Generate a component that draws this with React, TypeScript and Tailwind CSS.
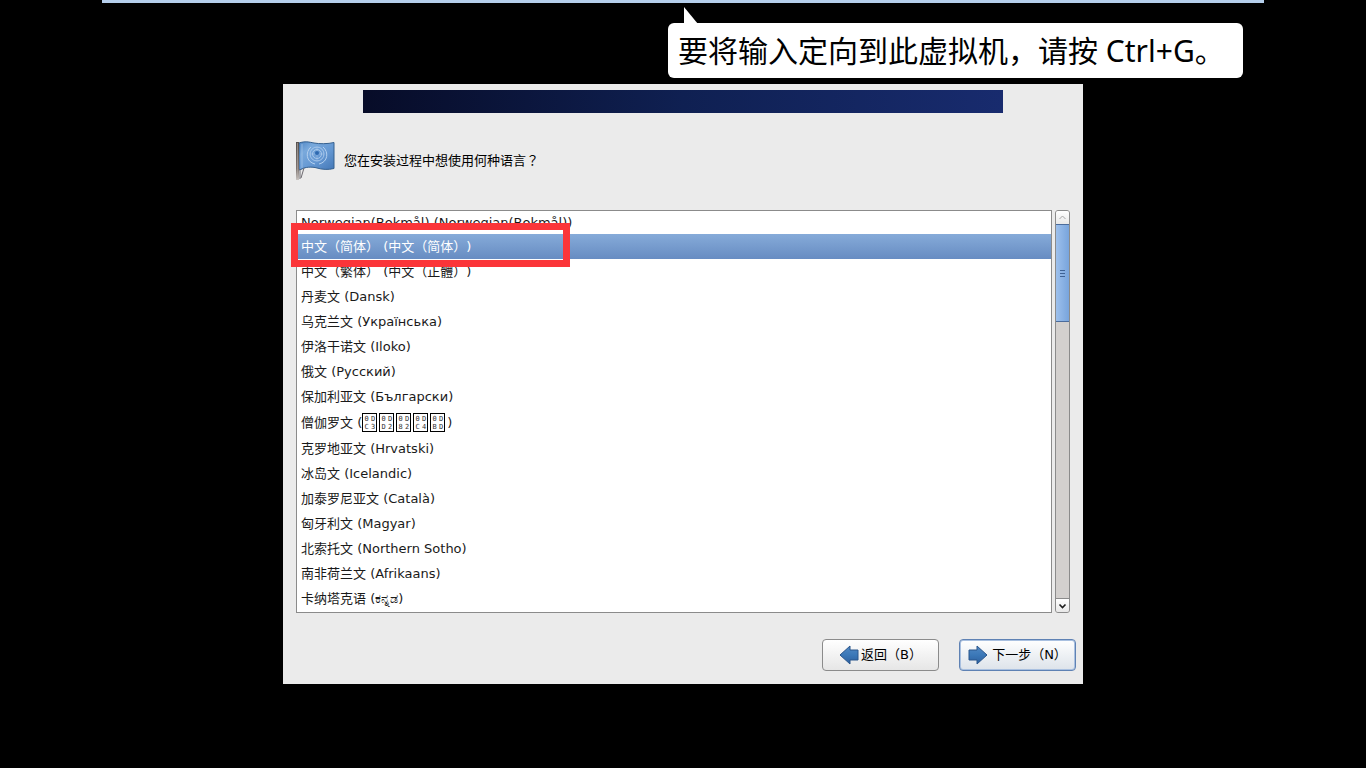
import { useState } from "react";
import clsx from "clsx";

interface Language {
  name: string;
  native?: string;
  // code points shown as boxes when no font covers the script
  missing?: string[];
}

const LANGUAGES: Language[] = [
  { name: "Norwegian(Bokmål)", native: "Norwegian(Bokmål)" },
  { name: "中文（简体）", native: "中文（简体）" },
  { name: "中文（繁体）", native: "中文（正體）" },
  { name: "丹麦文", native: "Dansk" },
  { name: "乌克兰文", native: "Українська" },
  { name: "伊洛干诺文", native: "Iloko" },
  { name: "俄文", native: "Русский" },
  { name: "保加利亚文", native: "Български" },
  { name: "僧伽罗文", missing: ["0DC3", "0DD2", "0D82", "0DC4", "0DBD"] },
  { name: "克罗地亚文", native: "Hrvatski" },
  { name: "冰岛文", native: "Icelandic" },
  { name: "加泰罗尼亚文", native: "Català" },
  { name: "匈牙利文", native: "Magyar" },
  { name: "北索托文", native: "Northern Sotho" },
  { name: "南非荷兰文", native: "Afrikaans" },
  { name: "卡纳塔克语", native: "ಕನ್ನಡ" },
];

function FlagIcon() {
  return (
    <svg width="40" height="40" viewBox="0 0 40 40" aria-hidden="true" className="shrink-0">
      <defs>
        <linearGradient id="flag" x1="0" y1="0" x2="1" y2="1">
          <stop offset="0" stopColor="#4f86c4" />
          <stop offset="0.25" stopColor="#79a9dc" />
          <stop offset="0.6" stopColor="#6497d2" />
          <stop offset="1" stopColor="#4377b6" />
        </linearGradient>
        <linearGradient id="pole" x1="0" y1="0" x2="0" y2="1">
          <stop offset="0" stopColor="#55504e" />
          <stop offset="0.7" stopColor="#7c7370" />
          <stop offset="1" stopColor="#c9c4c1" />
        </linearGradient>
      </defs>
      <path d="M3 2C9 0 13 1 18 2s14 1 20-.5v26c-6 1.500-12 1-17-.5s-12-1-15 1L3 29z" fill="url(#flag)" stroke="#35608f" />
      <path d="M6 3v24" stroke="#a9c8ea" strokeWidth="1" opacity="0.7" />
      <g fill="none" stroke="#b4d0ef" strokeWidth="1">
        <path d="M15 6c-6 5-5 15 4 17M27 6c6 5 5 15-4 17" />
        <circle cx="21" cy="13" r="7" opacity="0.8" />
        <circle cx="21" cy="13" r="4.500" opacity="0.8" />
        <path d="M14 13h14M21 6v14" opacity="0.4" />
      </g>
      <circle cx="21" cy="12" r="2" fill="#2f69b0" />
      <rect x="0" y="1" width="3" height="38" fill="url(#pole)" />
      <path d="M1.500 2v35" stroke="#b5aeaa" strokeWidth="1" opacity="0.6" />
      <path d="M4 28v10M8 27L5 37" stroke="#6d6a70" strokeWidth="1" fill="none" />
    </svg>
  );
}

function ArrowIcon({ direction }: { direction: "left" | "right" }) {
  return (
    <svg
      width="20"
      height="20"
      viewBox="0 0 20 20"
      aria-hidden="true"
      className={clsx("shrink-0", direction === "right" && "-scale-x-100")}
    >
      <defs>
        <linearGradient id={`arrow-${direction}`} x1="0" y1="0" x2="0" y2="1">
          <stop offset="0" stopColor="#5289c4" />
          <stop offset="0.5" stopColor="#3b78b8" />
          <stop offset="1" stopColor="#2c5f9e" />
        </linearGradient>
      </defs>
      <path
        d="M1 10L11 1v4h8v10h-8v4z"
        fill={`url(#arrow-${direction})`}
        stroke="#2a568c"
        strokeLinejoin="round"
      />
    </svg>
  );
}

function MissingGlyph({ code }: { code: string }) {
  return (
    <span className="mr-[2px] grid h-[19px] w-[15px] grid-cols-2 content-center border border-black font-['DejaVu_Sans_Mono',monospace] text-[7px] leading-[8px] text-[#333]">
      {code.split("").map((digit, i) => (
        <span key={i} className="text-center">{digit}</span>
      ))}
    </span>
  );
}

export default function App() {
  const [selected, setSelected] = useState(1);

  return (
    <main className="flex min-h-screen flex-col items-center bg-black font-['DejaVu_Sans','Noto_Sans_CJK_SC',sans-serif] text-[13px] text-[#1a1a1a] [text-spacing-trim:space-all]">
      <div className="h-[3px] w-[85%] bg-[#b6cfec]" />

      <div className="relative mt-[81px] w-full max-w-[800px] bg-[#ebebeb] pt-[6px] pb-[13px]">
        {/* Keyboard hint */}
        <div
          role="tooltip"
          className="absolute -top-[61px] left-[385px] flex h-[55px] w-[575px] items-center rounded-[6px] bg-white pl-[10px] font-['Noto_Sans','Noto_Sans_CJK_SC',sans-serif] text-[30px] whitespace-nowrap text-black"
        >
          <svg width="16" height="17" viewBox="0 0 16 17" aria-hidden="true" className="absolute -top-4 left-4">
            <path d="M0 0l14 17H0z" fill="#fff" />
          </svg>
          要将输入定向到此虚拟机，请按 Ctrl+G。
        </div>

        <div className="mx-[80px] h-[23px] bg-linear-to-r from-[#070c28] via-[#0f2052] via-50% to-[#182b6e]" />

        <div className="mt-[28px] flex items-center gap-2 px-[13px]">
          <FlagIcon />
          <h1 className="pb-[2px] text-black" id="question">
            您在安装过程中想使用何种语言
            <span className="font-['Noto_Sans_CJK_TC',sans-serif]">？</span>
          </h1>
        </div>

        <div className="mt-[29px] flex gap-[3px] px-[13px]">
          <div className="relative min-w-0 flex-1">
            <ul aria-labelledby="question" className="overflow-hidden border border-[#8b8b8b] bg-white pb-px">
              {LANGUAGES.map((language, i) => (
                <li key={language.name}>
                  <button
                    onClick={() => setSelected(i)}
                    aria-pressed={i === selected}
                    className={clsx(
                      "flex w-full items-center pl-1 text-left whitespace-pre",
                      i === 0 ? "h-[23px]" : language.missing ? "h-[27px]" : "h-[25px]",
                      i === selected && "bg-linear-to-b from-[#86abd9] to-[#678cc2] text-white",
                    )}
                  >
                    {language.name} (
                    {language.native}
                    {language.missing?.map((code) => <MissingGlyph key={code} code={code} />)}
                    )
                  </button>
                </li>
              ))}
            </ul>
            {/* Red highlight around the selected row */}
            <div className="pointer-events-none absolute top-[13px] -left-[5px] h-[44px] w-[279px] border-[7px] border-[#fb3539]" />
          </div>

          {/* Scrollbar */}
          <div className="flex w-[15px] flex-col overflow-hidden rounded-[3px] border border-[#8b8b8b] bg-[#d3d0ce]">
            <button aria-label="向上滚动" className="flex h-[13px] items-center justify-center bg-linear-to-b from-white to-[#e8e8e8]">
              <svg width="7" height="5" viewBox="0 0 7 5" aria-hidden="true">
                <path d="M.5 4l3-3 3 3" fill="none" stroke="#a5a5a5" />
              </svg>
            </button>
            <div className="flex h-[98px] items-center justify-center border-y border-[#4b6c9c] bg-linear-to-r from-[#9dc0ec] to-[#78a4dc]">
              <svg width="5" height="7" viewBox="0 0 5 7" aria-hidden="true">
                <path d="M0 .5h5M0 3.500h5M0 6.500h5" stroke="#3f6294" />
              </svg>
            </div>
            <button aria-label="向下滚动" className="mt-auto flex h-[14px] items-center justify-center border-t border-[#8b8b8b] bg-linear-to-b from-white to-[#e8e8e8]">
              <svg width="9" height="6" viewBox="0 0 9 6" aria-hidden="true">
                <path d="M1.500 1.500l3 3 3-3" fill="none" stroke="#1c1c1c" strokeWidth="1.600" />
              </svg>
            </button>
          </div>
        </div>

        <div className="mt-[26px] flex justify-end gap-5 pr-[7px] text-black">
          <button className="flex h-[32px] w-[117px] items-center justify-center gap-[2px] rounded-[4px] border border-[#8b8b8b] bg-linear-to-b from-white to-[#e6e6e6]">
            <ArrowIcon direction="left" />
            返回（B）
          </button>
          <button className="flex h-[32px] w-[117px] items-center justify-center gap-[4px] rounded-[4px] border border-[#5f82b4] bg-linear-to-b from-white to-[#dde3ea] ring-1 ring-[#a9c0e0] ring-inset">
            <ArrowIcon direction="right" />
            下一步（N）
          </button>
        </div>
      </div>
    </main>
  );
}
